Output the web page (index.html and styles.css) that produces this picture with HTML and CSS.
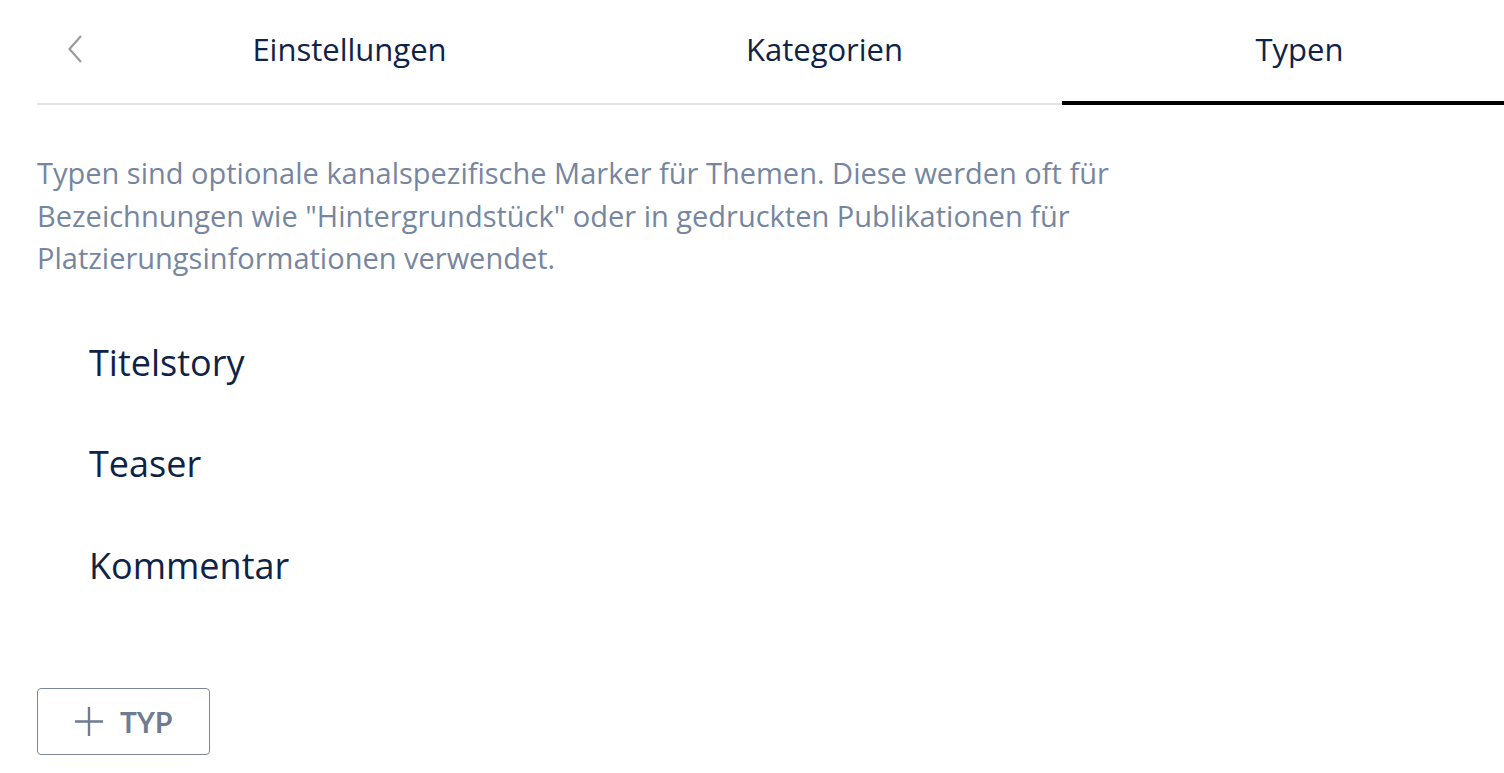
FILE: index.html
```html
<!DOCTYPE html>
<html lang="de">
<head>
<meta charset="utf-8">
<title>Typen</title>
<link rel="stylesheet" href="styles.css">
</head>
<body>
<div class="page">
  <nav class="tabs">
    <button class="back" aria-label="Zurück">
      <svg width="20" height="30" viewBox="0 0 20 30"><path d="M17 2 L5.5 15 L17 28" fill="none" stroke="#9a9a9a" stroke-width="2.2"/></svg>
    </button>
    <a class="tab">Einstellungen</a>
    <a class="tab">Kategorien</a>
    <a class="tab active">Typen</a>
  </nav>
  <p class="desc">Typen sind optionale kanalspezifische Marker für Themen. Diese werden oft für Bezeichnungen wie "Hintergrundstück" oder in gedruckten Publikationen für Platzierungsinformationen verwendet.</p>
  <ul class="list">
    <li>Titelstory</li>
    <li>Teaser</li>
    <li>Kommentar</li>
  </ul>
  <button class="add">
    <svg width="30" height="31" viewBox="0 0 30 31"><path d="M15 1 V30 M1 15.5 H29" stroke="#6f7b91" stroke-width="2.4" fill="none"/></svg>
    <span>TYP</span>
  </button>
</div>
</body>
</html>
```
FILE: styles.css
```css
html, body { margin: 0; padding: 0; background: #fff; overflow: hidden; }
body { width: 1504px; height: 773px; }
.page { margin-left: 37px; width: 1500px; font-family: "Open Sans", "Noto Sans", sans-serif; }
.tabs { display: flex; height: 103px; border-bottom: 2px solid #e4e4e4; }
.back { width: 75px; flex: none; border: 0; background: none; padding: 0 0 6px 27px; display: flex; align-items: center; justify-content: flex-start; }
.tab { flex: none; width: 475px; display: flex; align-items: center; justify-content: center; font-size: 31px; color: #0f2347; padding-bottom: 6px; box-sizing: border-box; }
.tab.active { border-bottom: 4px solid #000; margin-bottom: -2px; padding-bottom: 4px; }
.desc { margin: 47px 0 0 0; width: 1130px; font-family: "Open Sans", "Noto Sans", sans-serif; font-weight: 400; font-size: 29px; line-height: 42.5px; color: #7686a0; }
.list { list-style: none; margin: 63px 0 0 0; padding: 0 0 0 52px; }
.list li { font-size: 36px; line-height: 40px; height: 101.5px; color: #0f2347; }
.add { margin-top: 41px; display: flex; align-items: center; gap: 16px; width: 173px; height: 67px; padding: 0 0 0 36px; border: 1.5px solid #7d8799; border-radius: 4px; background: #fff; font-family: "Lato", sans-serif; font-weight: 700; font-size: 28px; color: #6f7b91; box-sizing: border-box; }
```
